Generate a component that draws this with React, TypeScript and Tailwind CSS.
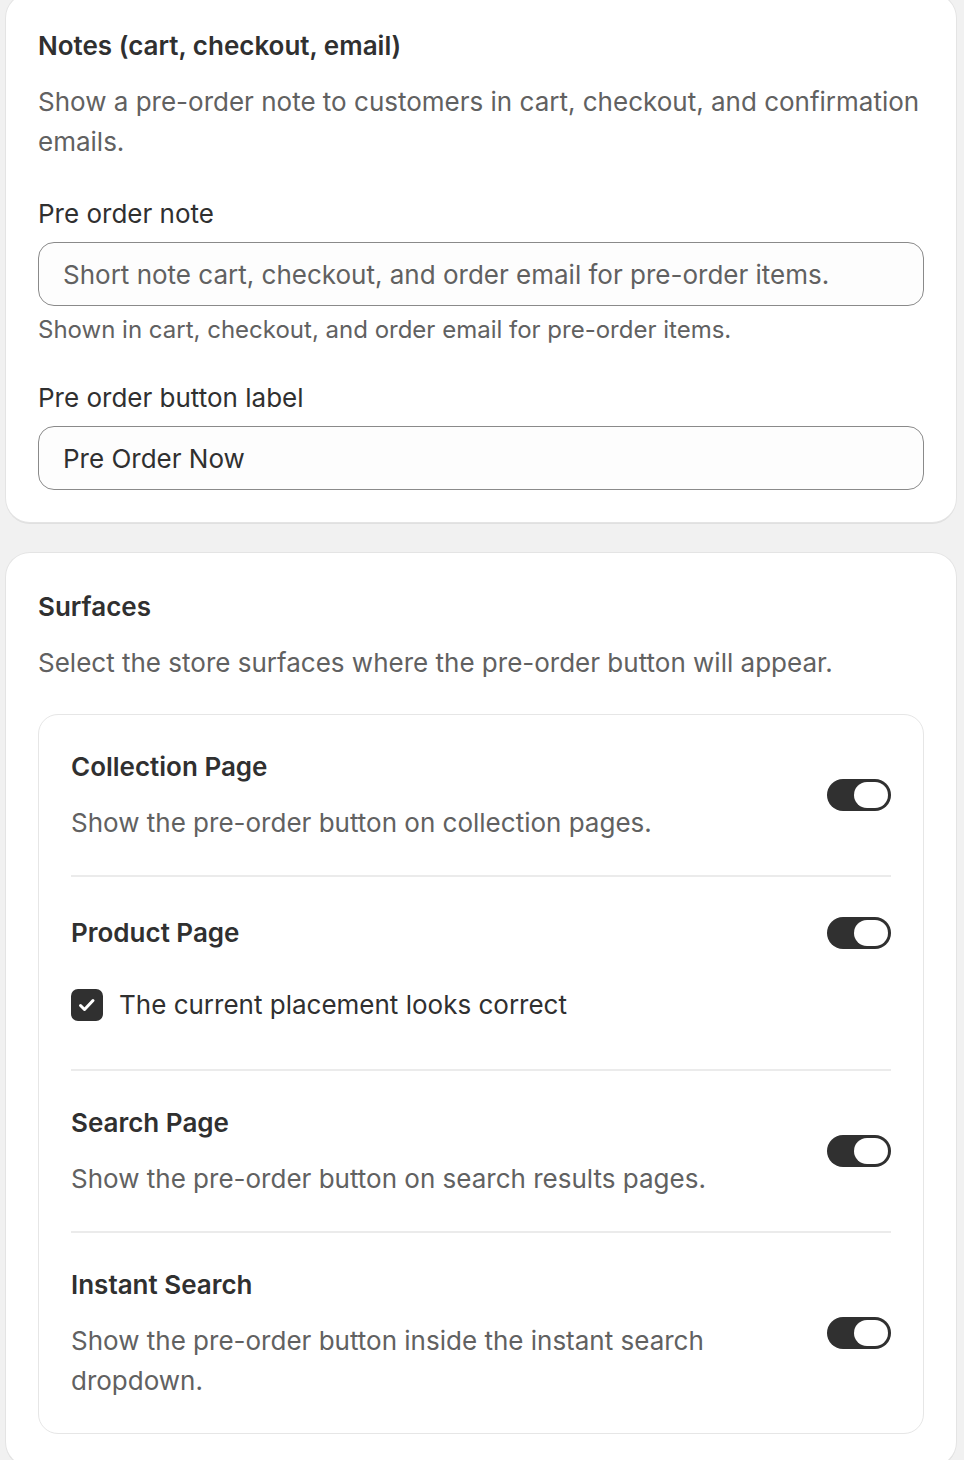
import { ReactNode } from 'react';

function Toggle() {
  return (
    <div className="w-[64px] h-[32px] shrink-0 rounded-full bg-[#303030] p-[3px] flex justify-end items-center">
      <div className="w-[34px] h-[26px] rounded-full bg-white" />
    </div>
  );
}

function Checkbox() {
  return (
    <div className="w-[32px] h-[32px] shrink-0 rounded-[7px] bg-[#303030] flex items-center justify-center">
      <svg className="w-[24px] h-[24px] text-white" viewBox="0 0 24 24" fill="none" stroke="currentColor" strokeWidth="3" strokeLinecap="round" strokeLinejoin="round">
        <path d="M5.5 12.5l4 4 8.5-9" />
      </svg>
    </div>
  );
}

function Card({ children, className = '' }: { children: ReactNode; className?: string }) {
  return (
    <div className={`bg-white rounded-[24px] shadow-[0_0_0_1px_#e4e4e4,0_2px_0_0_rgba(26,26,26,0.08)] px-8 pb-8 ${className}`}>
      {children}
    </div>
  );
}

function Field({ label, value, placeholder, help }: { label: string; value?: string; placeholder?: string; help?: string }) {
  return (
    <div className="mt-8">
      <label className="block text-[26px] leading-[40px] text-[#303030]">{label}</label>
      <input
        className="mt-2 w-full h-[64px] rounded-[16px] border border-[#8a8a8a] bg-[#fdfdfd] px-6 text-[26px] text-[#303030] placeholder:text-[#616161] outline-none"
        defaultValue={value}
        placeholder={placeholder}
      />
      {help && <p className="mt-1 text-[24px] leading-[40px] text-[#616161]">{help}</p>}
    </div>
  );
}

function SurfaceRow({ title, description }: { title: string; description: string }) {
  return (
    <div className="py-8 flex items-center gap-8">
      <div className="flex-1">
        <h3 className="text-[26px] leading-[40px] font-semibold text-[#303030]">{title}</h3>
        <p className="mt-4 text-[26px] leading-[40px] text-[#616161]">{description}</p>
      </div>
      <Toggle />
    </div>
  );
}

export default function App() {
  return (
    <div className="min-h-screen bg-[#f1f1f1] pl-[6px] pr-[8px] overflow-hidden" style={{ fontFamily: 'Inter, "Noto Sans", sans-serif' }}>
      <Card className="-mt-[6px] pt-8">
        <h2 className="text-[26px] leading-[40px] font-semibold text-[#303030]">Notes (cart, checkout, email)</h2>
        <p className="mt-4 text-[26px] leading-[40px] text-[#616161]">
          Show a pre-order note to customers in cart, checkout, and confirmation emails.
        </p>
        <Field
          label="Pre order note"
          placeholder="Short note cart, checkout, and order email for pre-order items."
          help="Shown in cart, checkout, and order email for pre-order items."
        />
        <div className="-mt-1">
          <Field label="Pre order button label" value="Pre Order Now" />
        </div>
      </Card>

      <Card className="mt-[31px] pt-[34px]">
        <h2 className="text-[26px] leading-[40px] font-semibold text-[#303030]">Surfaces</h2>
        <p className="mt-4 text-[26px] leading-[40px] text-[#616161]">
          Select the store surfaces where the pre-order button will appear.
        </p>

        <div className="mt-[31px] rounded-[20px] border border-[#e6e6e6] px-8">
          <SurfaceRow title="Collection Page" description="Show the pre-order button on collection pages." />
          <div className="h-[2px] bg-[#ebebeb]" />

          <div className="pt-9 pb-[44px]">
            <div className="flex items-center justify-between gap-8">
              <h3 className="text-[26px] leading-[40px] font-semibold text-[#303030]">Product Page</h3>
              <Toggle />
            </div>
            <label className="mt-8 flex items-center gap-4">
              <Checkbox />
              <span className="text-[26px] leading-[40px] text-[#303030]">The current placement looks correct</span>
            </label>
          </div>
          <div className="h-[2px] bg-[#ebebeb]" />

          <SurfaceRow title="Search Page" description="Show the pre-order button on search results pages." />
          <div className="h-[2px] bg-[#ebebeb]" />

          <SurfaceRow title="Instant Search" description="Show the pre-order button inside the instant search dropdown." />
        </div>
      </Card>
    </div>
  );
}
